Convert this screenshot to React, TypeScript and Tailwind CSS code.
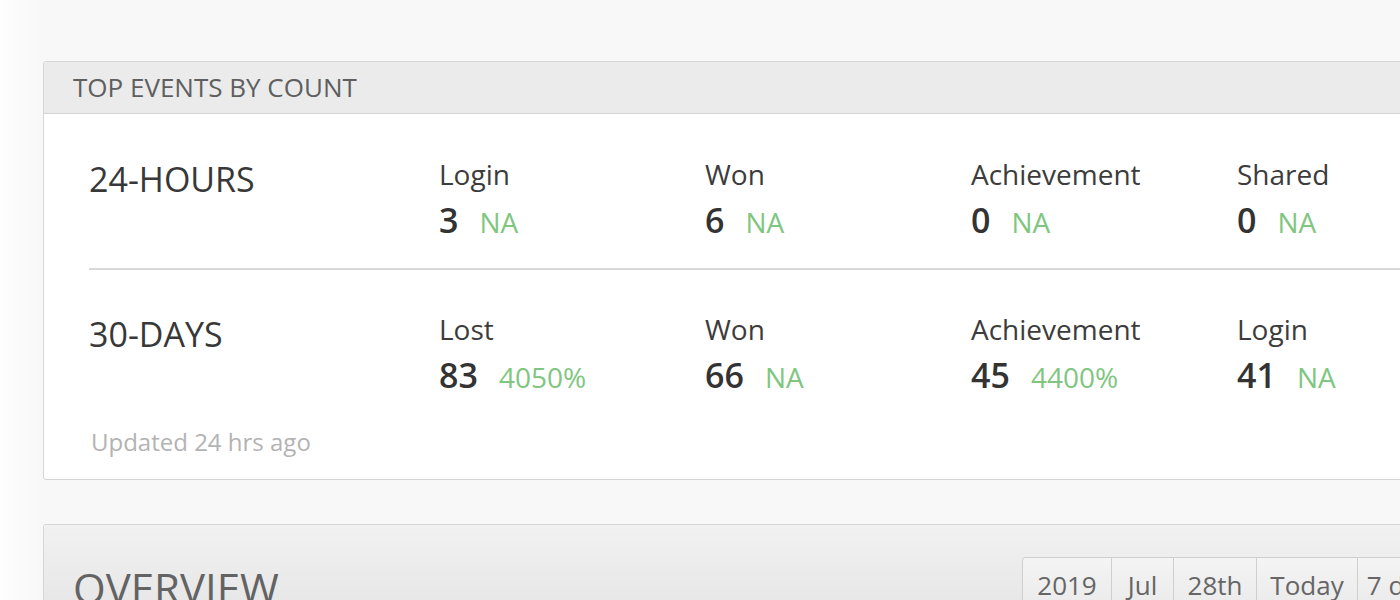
import React from 'react';

type Stat = { label: string; value: string; change: string };

const ROWS: { title: string; stats: Stat[] }[] = [
  {
    title: '24-HOURS',
    stats: [
      { label: 'Login', value: '3', change: 'NA' },
      { label: 'Won', value: '6', change: 'NA' },
      { label: 'Achievement', value: '0', change: 'NA' },
      { label: 'Shared', value: '0', change: 'NA' },
    ],
  },
  {
    title: '30-DAYS',
    stats: [
      { label: 'Lost', value: '83', change: '4050%' },
      { label: 'Won', value: '66', change: 'NA' },
      { label: 'Achievement', value: '45', change: '4400%' },
      { label: 'Login', value: '41', change: 'NA' },
    ],
  },
];

const DATES = [
  { text: '2019', w: 'w-[88px]' },
  { text: 'Jul', w: 'w-[62px]' },
  { text: '28th', w: 'w-[83px]' },
  { text: 'Today', w: 'w-[101px]' },
  { text: '7 days', w: 'w-[96px]' },
];

const StatCell: React.FC<{ stat: Stat }> = ({ stat }) => (
  <div className="w-[266px] shrink-0">
    <div className="text-[28px] leading-[32px] text-[#3c3c3c]">{stat.label}</div>
    <div className="mt-[10px] flex items-baseline gap-[21px]">
      <span className="text-[34px] leading-[40px] font-semibold text-[#333]">{stat.value}</span>
      <span className="text-[28px] leading-[40px] text-[#80c681]">{stat.change}</span>
    </div>
  </div>
);

export default function App() {
  return (
    <div
      className="relative w-[1400px] h-[600px] overflow-hidden bg-[#f8f8f8] pt-[61px] pl-[43px]"
      style={{ fontFamily: '"Open Sans", "Noto Sans", sans-serif' }}
    >
      <div className="pointer-events-none absolute left-0 top-0 h-full w-[40px] bg-gradient-to-r from-white/80 to-transparent" />

      {/* top events card */}
      <div className="w-[1420px] bg-white border border-[#d5d5d5] rounded-[3px]">
        <div className="h-[52px] flex items-center pl-[29px] bg-[#ebebeb] border-b border-[#d5d5d5] rounded-t-[3px]">
          <span className="text-[26px] text-[#5f5f5f]">TOP EVENTS BY COUNT</span>
        </div>
        <div className="px-[45px]">
          {ROWS.map((row, i) => (
            <div
              key={row.title}
              className={
                i === 0
                  ? 'flex pt-[44px] pb-[26px] border-b-2 border-[#d8d8d8]'
                  : 'flex pt-[43px]'
              }
            >
              <div className="w-[350px] shrink-0 mt-[1px] text-[34px] leading-[40px] text-[#383838]">{row.title}</div>
              {row.stats.map((s, j) => (
                <StatCell key={j} stat={s} />
              ))}
            </div>
          ))}
          <div className="mt-[29px] pb-[21px] pl-[2px] text-[24px] leading-[32px] text-[#b3b3b3]">Updated 24 hrs ago</div>
        </div>
      </div>

      {/* overview card */}
      <div className="mt-[44px] w-[1420px] h-[200px] bg-white border border-[#d5d5d5] rounded-[3px]">
        <div className="flex pt-[32px] pl-[29px] h-[120px] bg-gradient-to-b from-[#f1f1f1] to-[#e2e2e2] rounded-t-[3px]">
          <div className="w-[949px] shrink-0 pt-[3px] text-[42px] leading-[56px] text-[#636363]">OVERVIEW</div>
          <div className="flex h-[60px] border border-[#cfcfcf] rounded-[3px] bg-gradient-to-b from-[#f4f4f4] to-[#e9e9e9]">
            {DATES.map((d, i) => (
              <div
                key={d.text}
                className={`${d.w} pt-[8px] text-center text-[26px] text-[#666] ${i > 0 ? 'border-l border-[#cfcfcf]' : ''}`}
              >
                {d.text}
              </div>
            ))}
          </div>
        </div>
      </div>
    </div>
  );
}
